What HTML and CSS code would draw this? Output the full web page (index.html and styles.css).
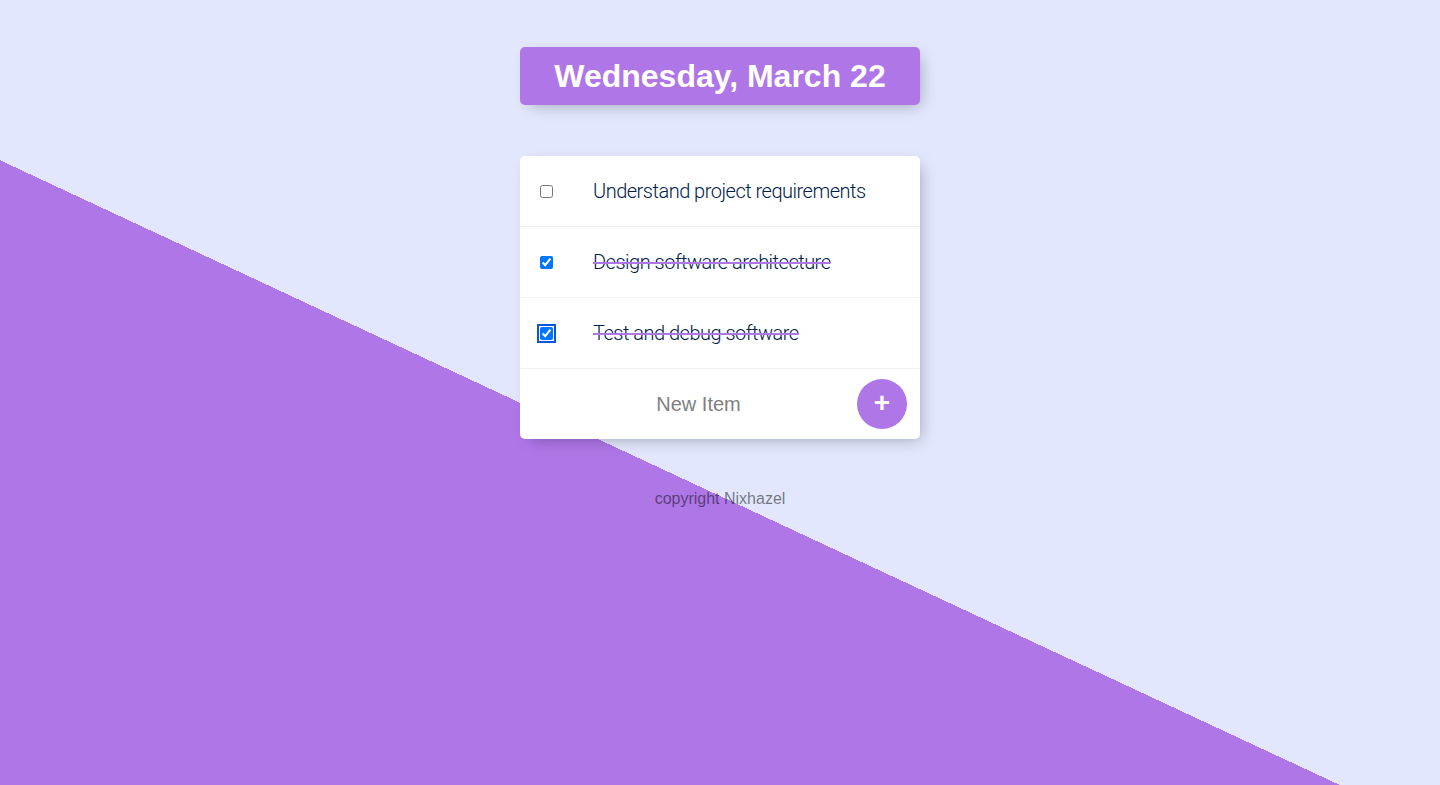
FILE: index.html
```html
<!DOCTYPE html>
<html lang="en">
<head>
<meta charset="utf-8">
<title>To Do List</title>
<link rel="stylesheet" href="styles.css">
</head>
<body>
  <div class="box heading">
    <h1 class="title">Wednesday, March 22</h1>
  </div>
  <div class="box list">
    <div class="item">
      <input class="check" type="checkbox">
      <p class="text">Understand project requirements</p>
    </div>
    <div class="item">
      <input class="check" type="checkbox" checked>
      <p class="text">Design software architecture</p>
    </div>
    <div class="item">
      <input class="check focused" type="checkbox" checked>
      <p class="text">Test and debug software</p>
    </div>
    <form class="item new-form" onsubmit="return false">
      <input class="new-input" type="text" name="newItem" placeholder="New Item" autocomplete="off">
      <button class="add-btn" type="submit">+</button>
    </form>
  </div>
  <footer class="footer">copyright Nixhazel</footer>
</body>
</html>
```

FILE: styles.css
```css
html {
  background: linear-gradient(25deg, #AF76E8 50%, #E2E7FD 50%) 0 0 / 100% 992px no-repeat, #E2E7FD;
  font-family: "Liberation Sans", Arial, sans-serif;
}

body {
  margin: 0;
  padding-top: 47px;
}

.box {
  max-width: 400px;
  margin: 0 auto;
  background: #ffffff;
  border-radius: 5px;
  box-shadow: 5px 5px 15px -5px rgba(0, 0, 0, 0.3);
}

.heading {
  background-color: #AF76E8;
  text-align: center;
}

.title {
  margin: 0;
  padding: 10px;
  color: #ffffff;
  font-size: 32px;
  line-height: 38px;
  font-weight: 700;
}

.list {
  margin-top: 51px;
}

.item {
  min-height: 70px;
  display: flex;
  align-items: center;
  border-bottom: 1px solid #F1F1F1;
}

.item:last-child {
  border-bottom: 0;
}

.check {
  width: 13px;
  height: 13px;
  margin: 20px;
  flex: none;
}

.focused {
  outline: 2px solid #0a57d8;
  outline-offset: 1px;
  border-radius: 2px;
}

.text {
  margin: 0;
  padding: 20px;
  font-family: Roboto, "Liberation Sans", sans-serif;
  font-size: 20px;
  font-weight: 300;
  letter-spacing: -0.5px;
  color: #00204a;
}

.check:checked + .text {
  text-decoration: line-through;
  text-decoration-color: #AF76E8;
  text-decoration-thickness: 1.5px;
}

.new-form {
  margin: 0;
  padding-left: 22px;
  gap: 2px;
}

.new-input {
  width: 313px;
  height: 60px;
  padding: 0;
  border: none;
  background: transparent;
  text-align: center;
  font-family: "Liberation Sans", Arial, sans-serif;
  font-size: 20px;
  color: #333;
}

.new-input::placeholder {
  color: grey;
  opacity: 1;
}

.new-input:focus {
  outline: none;
  box-shadow: inset 0 -3px 0 0 #AF76E8;
}

.add-btn {
  width: 50px;
  height: 50px;
  padding: 0 0 2px;
  border: 0;
  border-radius: 50%;
  background-color: #AF76E8;
  color: #ffffff;
  font-family: "Liberation Sans", Arial, sans-serif;
  font-size: 28px;
  line-height: 1;
  font-weight: 700;
}

.footer {
  margin-top: 51px;
  text-align: center;
  color: rgba(0, 0, 0, 0.5);
  font-size: 16px;
  line-height: 18px;
}
```
